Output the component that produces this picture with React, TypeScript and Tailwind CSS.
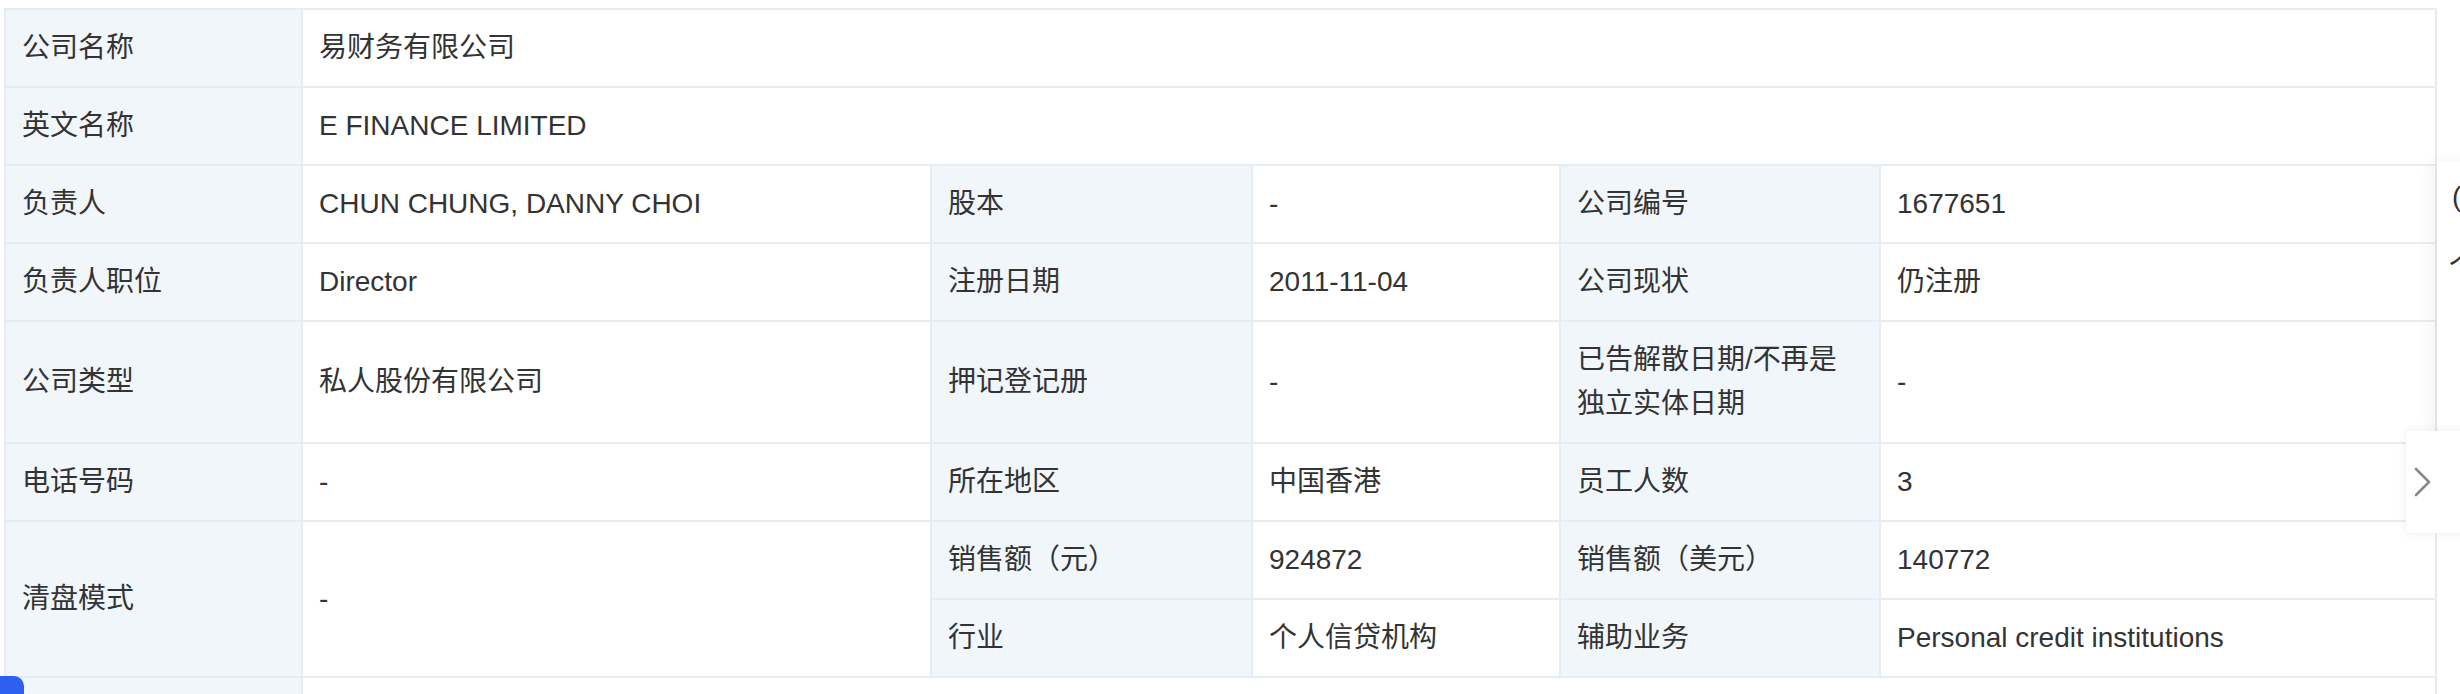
import React from "react";

const font = {
  fontFamily: '"Liberation Sans", "Noto Sans CJK SC", sans-serif',
};

function L({ children, className = "" }: { children?: React.ReactNode; className?: string }) {
  return (
    <div className={`bg-[#f1f6fb] px-4 py-4 flex items-center text-[28px] leading-[44px] text-[#333] ${className}`}>
      {children}
    </div>
  );
}

function V({ children, className = "" }: { children?: React.ReactNode; className?: string }) {
  return (
    <div className={`bg-white px-4 py-4 flex items-center text-[28px] leading-[44px] text-[#333] ${className}`}>
      {children}
    </div>
  );
}

export default function App() {
  return (
    <div className="relative w-[2460px] h-[694px] overflow-hidden bg-white" style={font}>
      <div className="pt-[8px] pl-[4px]">
        <div className="grid grid-cols-[295px_627px_319px_306px_318px_554px] gap-[2px] bg-[#e6ecf3] p-[2px] w-[2433px]">
          <L>公司名称</L>
          <V className="col-span-5">易财务有限公司</V>

          <L>英文名称</L>
          <V className="col-span-5">E FINANCE LIMITED</V>

          <L>负责人</L>
          <V>CHUN CHUNG, DANNY CHOI</V>
          <L>股本</L>
          <V>-</V>
          <L>公司编号</L>
          <V>1677651</V>

          <L>负责人职位</L>
          <V>Director</V>
          <L>注册日期</L>
          <V>2011-11-04</V>
          <L>公司现状</L>
          <V>仍注册</V>

          <L>公司类型</L>
          <V>私人股份有限公司</V>
          <L>押记登记册</L>
          <V>-</V>
          <L>已告解散日期/不再是独立实体日期</L>
          <V>-</V>

          <L>电话号码</L>
          <V>-</V>
          <L>所在地区</L>
          <V>中国香港</V>
          <L>员工人数</L>
          <V>3</V>

          <L className="row-span-2">清盘模式</L>
          <V className="row-span-2">-</V>
          <L>销售额（元）</L>
          <V>924872</V>
          <L>销售额（美元）</L>
          <V>140772</V>
          <L>行业</L>
          <V>个人信贷机构</V>
          <L>辅助业务</L>
          <V>Personal credit institutions</V>

          <L>&nbsp;</L>
          <V className="col-span-5">&nbsp;</V>
        </div>
      </div>

      {/* right side floating panel (cut off) */}
      <div className="absolute left-[2437px] top-[161px] w-[200px] h-[270px] bg-white shadow-[-6px_0_14px_rgba(0,0,0,0.05)]">
        <div className="pl-[15px] pt-[14px] text-[28px] leading-[44px] text-[#333]">(</div>
        <div className="pl-[12px] pt-[26px] text-[28px] leading-[44px] text-[#333]">个</div>
      </div>

      {/* chevron button */}
      <div className="absolute left-[2406px] top-[431px] w-[80px] h-[102px] bg-white rounded-l-[4px] shadow-[0_0_10px_rgba(0,0,0,0.08)] flex items-center pl-[8px]">
        <svg width="18" height="30" viewBox="0 0 18 30" fill="none">
          <path d="M2 2 L15 15 L2 28" stroke="#8a8a8a" strokeWidth="2.6" strokeLinecap="round" strokeLinejoin="round" />
        </svg>
      </div>

      {/* blue badge bottom-left */}
      <div className="absolute left-[-12px] top-[676px] w-[36px] h-[40px] rounded-[10px] bg-[#2d5ff0]" />
    </div>
  );
}
